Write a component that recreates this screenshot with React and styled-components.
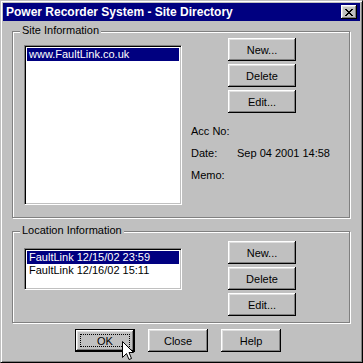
import React from "react";
import styled, { createGlobalStyle } from "styled-components";

const Global = createGlobalStyle`
  html, body { margin: 0; padding: 0; background: #c0c0c0; }
  body { font-family: "Liberation Sans", Arial, sans-serif; font-size: 11px; color: #000; }
  * { box-sizing: border-box; }
`;

const Window = styled.div`
  position: relative;
  width: 363px;
  height: 363px;
  background: #c0c0c0;
  border: 1px solid;
  border-color: #c0c0c0 #000 #000 #c0c0c0;
  box-shadow: inset 1px 1px #fff, inset -1px -1px #808080;
  padding: 2px;
  display: flex;
  flex-direction: column;
`;

const TitleBar = styled.div`
  height: 18px;
  background: #000080;
  display: flex;
  align-items: center;
  justify-content: space-between;
  padding: 0 3px 0 3px;
`;

const Title = styled.span`
  color: #fff;
  font-weight: bold;
  font-size: 12px;
  line-height: 14px;
  white-space: nowrap;
`;

const CloseBox = styled.div`
  width: 16px;
  height: 14px;
  background: #c0c0c0;
  box-shadow: inset -1px -1px #000, inset 1px 1px #fff, inset -2px -2px #808080, inset 2px 2px #dfdfdf;
  display: flex;
  align-items: center;
  justify-content: center;
`;

const Body = styled.div`
  flex: 1;
  display: flex;
  flex-direction: column;
  padding: 10px 9px 0 9px;
`;

const Group = styled.div`
  position: relative;
  height: ${(p) => p.$h}px;
  border: 1px solid #808080;
  box-shadow: inset 1px 1px #fff, 1px 1px #fff;
  margin-right: 1px;
  margin-bottom: ${(p) => p.$mb || 0}px;
  padding: ${(p) => p.$pt}px 0 0 11px;
  display: flex;
  align-items: flex-start;
`;

const Legend = styled.span`
  position: absolute;
  top: -8px;
  left: 7px;
  padding: 0 2px;
  line-height: 13px;
  background: #c0c0c0;
  white-space: nowrap;
`;

const ListBox = styled.div`
  width: 158px;
  height: ${(p) => p.$h}px;
  margin-top: 7px;
  background: #fff;
  border: 1px solid;
  border-color: #808080 #fff #fff #808080;
  box-shadow: inset 1px 1px #000, inset -1px -1px #c0c0c0;
  padding: 2px;
  display: flex;
  flex-direction: column;
`;

const Item = styled.div`
  height: 13px;
  line-height: 13px;
  padding-left: 2px;
  white-space: nowrap;
  background: ${(p) => (p.$sel ? "#000080" : "transparent")};
  color: ${(p) => (p.$sel ? "#fff" : "#000")};
`;

const Side = styled.div`
  margin-left: 9px;
  display: flex;
  flex-direction: column;
`;

const ButtonCol = styled.div`
  margin-left: 37px;
  display: flex;
  flex-direction: column;
  gap: 3px;
`;

const Button = styled.button`
  position: relative;
  width: ${(p) => p.$w || 68}px;
  height: 23px;
  padding: 0;
  margin: 0;
  font-family: "Liberation Sans", Arial, sans-serif;
  font-size: 11px;
  color: #000;
  background: #c0c0c0;
  border: ${(p) => (p.$default ? "1px solid #000" : "none")};
  box-shadow: inset -1px -1px #000, inset 1px 1px #fff, inset -2px -2px #808080, inset 2px 2px #dfdfdf;
  display: flex;
  align-items: center;
  justify-content: center;
  outline: none;
`;

const Focus = styled.span`
  display: flex;
  align-items: center;
  justify-content: center;
  width: calc(100% - 8px);
  height: calc(100% - 8px);
  border: 1px dotted #000;
`;

const InfoGrid = styled.div`
  margin-top: 12px;
  display: grid;
  grid-template-columns: 46px auto;
  row-gap: 9px;
  line-height: 13px;
  white-space: nowrap;
`;

const Footer = styled.div`
  margin-top: 6px;
  padding-left: 63px;
  display: flex;
  gap: 13px;
`;

const Cursor = styled.svg`
  position: absolute;
  left: 121px;
  top: 340px;
`;

export default function App() {
  return (
    <>
      <Global />
      <Window>
        <TitleBar>
          <Title>Power Recorder System - Site Directory</Title>
          <CloseBox>
            <svg width="8" height="7" viewBox="0 0 8 7">
              <path d="M0 0h2v1h1v1h2V1h1V0h2v1H7v1H6v1H5v1h1v1h1v1h1v1H6V6H5V5H3v1H2v1H0V6h1V5h1V4h1V3H2V2H1V1H0z" fill="#000" />
            </svg>
          </CloseBox>
        </TitleBar>
        <Body>
          <Group $h={187} $pt={6} $mb={13}>
            <Legend>Site Information</Legend>
            <ListBox $h={160}>
              <Item $sel>www.FaultLink.co.uk</Item>
            </ListBox>
            <Side>
              <ButtonCol>
                <Button>New...</Button>
                <Button>Delete</Button>
                <Button>Edit...</Button>
              </ButtonCol>
              <InfoGrid>
                <span>Acc No:</span>
                <span></span>
                <span>Date:</span>
                <span>Sep 04 2001 14:58</span>
                <span>Memo:</span>
                <span></span>
              </InfoGrid>
            </Side>
          </Group>
          <Group $h={92} $pt={9}>
            <Legend>Location Information</Legend>
            <ListBox $h={42}>
              <Item $sel>FaultLink 12/15/02 23:59</Item>
              <Item>FaultLink 12/16/02 15:11</Item>
            </ListBox>
            <Side>
              <ButtonCol>
                <Button>New...</Button>
                <Button>Delete</Button>
                <Button>Edit...</Button>
              </ButtonCol>
            </Side>
          </Group>
          <Footer>
            <Button $w={60} $default>
              <Focus>OK</Focus>
            </Button>
            <Button $w={60}>Close</Button>
            <Button $w={60}>Help</Button>
          </Footer>
        </Body>
        <Cursor width="12" height="20" viewBox="0 0 12 20">
          <path d="M0.5 0.5 L0.5 16.5 L4.5 12.5 L7 18.5 L9.5 17.5 L7 11.5 L11.5 11.5 Z" fill="#fff" stroke="#000" strokeWidth="1" />
        </Cursor>
      </Window>
    </>
  );
}
